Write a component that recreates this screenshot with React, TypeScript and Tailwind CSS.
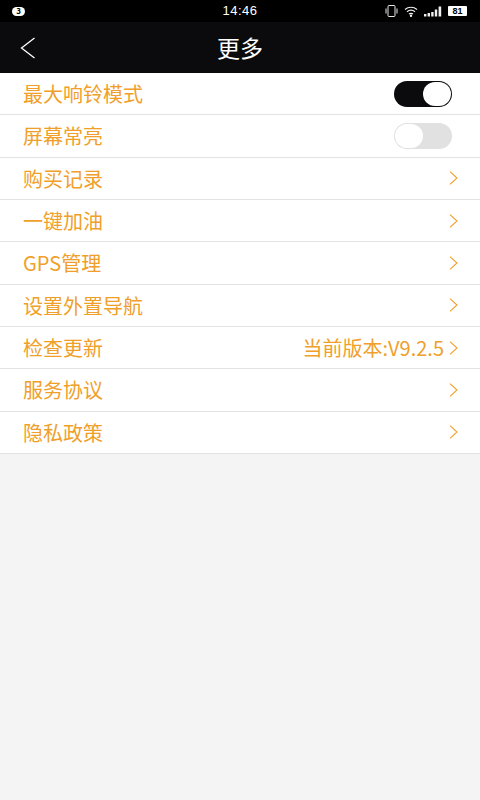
import React from 'react';

const font = "font-['Noto_Sans_CJK_SC','Liberation_Sans',sans-serif]";

const Chevron = () => (
  <svg width="9" height="14" viewBox="0 0 9 14" fill="none" className="shrink-0">
    <path d="M1 0.7 L8 7 L1 13.3" stroke="#f0a02a" strokeWidth="1.1" />
  </svg>
);

const Toggle = ({ on }: { on: boolean }) => (
  <div
    className={`w-[58px] h-[26px] mr-[6px] mt-[1px] rounded-full flex items-center p-[1px] ${
      on ? 'bg-[#0b0a0d] justify-end' : 'bg-[#e1e1e1] justify-start'
    }`}
  >
    <div className="w-[28px] h-[24px] rounded-full bg-white" />
  </div>
);

const Row = ({ label, children }: { label: string; children: React.ReactNode }) => (
  <div className="h-[42.33px] shrink-0 bg-white border-b border-[#e3e3e3] flex items-center justify-between pl-[23px] pr-[22px]">
    <span className="text-[20px] leading-none pt-[1px] text-[#f0a02a]">{label}</span>
    {children}
  </div>
);

const StatusBar = () => (
  <div className="h-[22px] shrink-0 bg-black flex items-center justify-between pl-[12px] pr-[13px] relative">
    <div className="w-[13px] h-[9px] rounded-full bg-white flex items-center justify-center text-[8px] font-bold text-black leading-none">
      3
    </div>
    <span className="absolute left-0 right-0 text-center text-[13px] text-white font-['Liberation_Sans',sans-serif] tracking-[0.5px]">
      14:46
    </span>
    <div className="flex items-center gap-[6px]">
      <svg width="13" height="12" viewBox="0 0 13 12" fill="none" stroke="#e8e8e8">
        <rect x="3" y="0.5" width="7" height="11" rx="1" strokeWidth="1" />
        <path d="M1 3.5 V8.5 M12 3.5 V8.5" strokeWidth="1" />
      </svg>
      <svg width="14" height="11" viewBox="0 0 14 11" fill="none" stroke="#f0f0f0" strokeWidth="1.2">
        <path d="M1 3.5 C4.5 0.5 9.5 0.5 13 3.5" />
        <path d="M3 5.8 C5.3 4 8.7 4 11 5.8" />
        <path d="M5 8 C6.2 7.2 7.8 7.2 9 8" />
        <circle cx="7" cy="9.8" r="0.6" fill="#f0f0f0" />
      </svg>
      <svg width="18" height="11" viewBox="0 0 18 11" fill="#f0f0f0">
        <rect x="0" y="8" width="2.4" height="2.5" />
        <rect x="3.6" y="7" width="2.4" height="3.5" />
        <rect x="7.2" y="6" width="2.4" height="4.5" />
        <rect x="10.8" y="3.5" width="2.4" height="7" />
        <rect x="14.6" y="0.5" width="2.6" height="10" />
      </svg>
      <div className="w-[19px] h-[10px] bg-white rounded-[1px] flex items-center justify-center text-[9px] font-bold text-black leading-none font-['Liberation_Sans',sans-serif]">
        81
      </div>
    </div>
  </div>
);

const items = ['购买记录', '一键加油', 'GPS管理', '设置外置导航'];
const tail = ['服务协议', '隐私政策'];

export default function App() {
  return (
    <div className={`w-[480px] h-[800px] bg-[#f4f4f4] flex flex-col overflow-hidden ${font}`}>
      <StatusBar />
      <div className="h-[51px] bg-[#0b0a0d] flex items-center justify-center relative shrink-0">
        <svg width="16" height="22" viewBox="0 0 16 22" fill="none" className="absolute left-[20px] top-[15px]">
          <path d="M14.5 1 L1.5 11 L14.5 21" stroke="#fff" strokeWidth="1.3" />
        </svg>
        <span className="text-[23px] text-white leading-none">更多</span>
      </div>
      <Row label="最大响铃模式">
        <Toggle on />
      </Row>
      <Row label="屏幕常亮">
        <Toggle on={false} />
      </Row>
      {items.map((t) => (
        <Row key={t} label={t}>
          <Chevron />
        </Row>
      ))}
      <Row label="检查更新">
        <div className="flex items-center gap-[5px]">
          <span className="text-[20px] leading-none pt-[1px] text-[#f0a02a]">当前版本:V9.2.5</span>
          <Chevron />
        </div>
      </Row>
      {tail.map((t) => (
        <Row key={t} label={t}>
          <Chevron />
        </Row>
      ))}
    </div>
  );
}
